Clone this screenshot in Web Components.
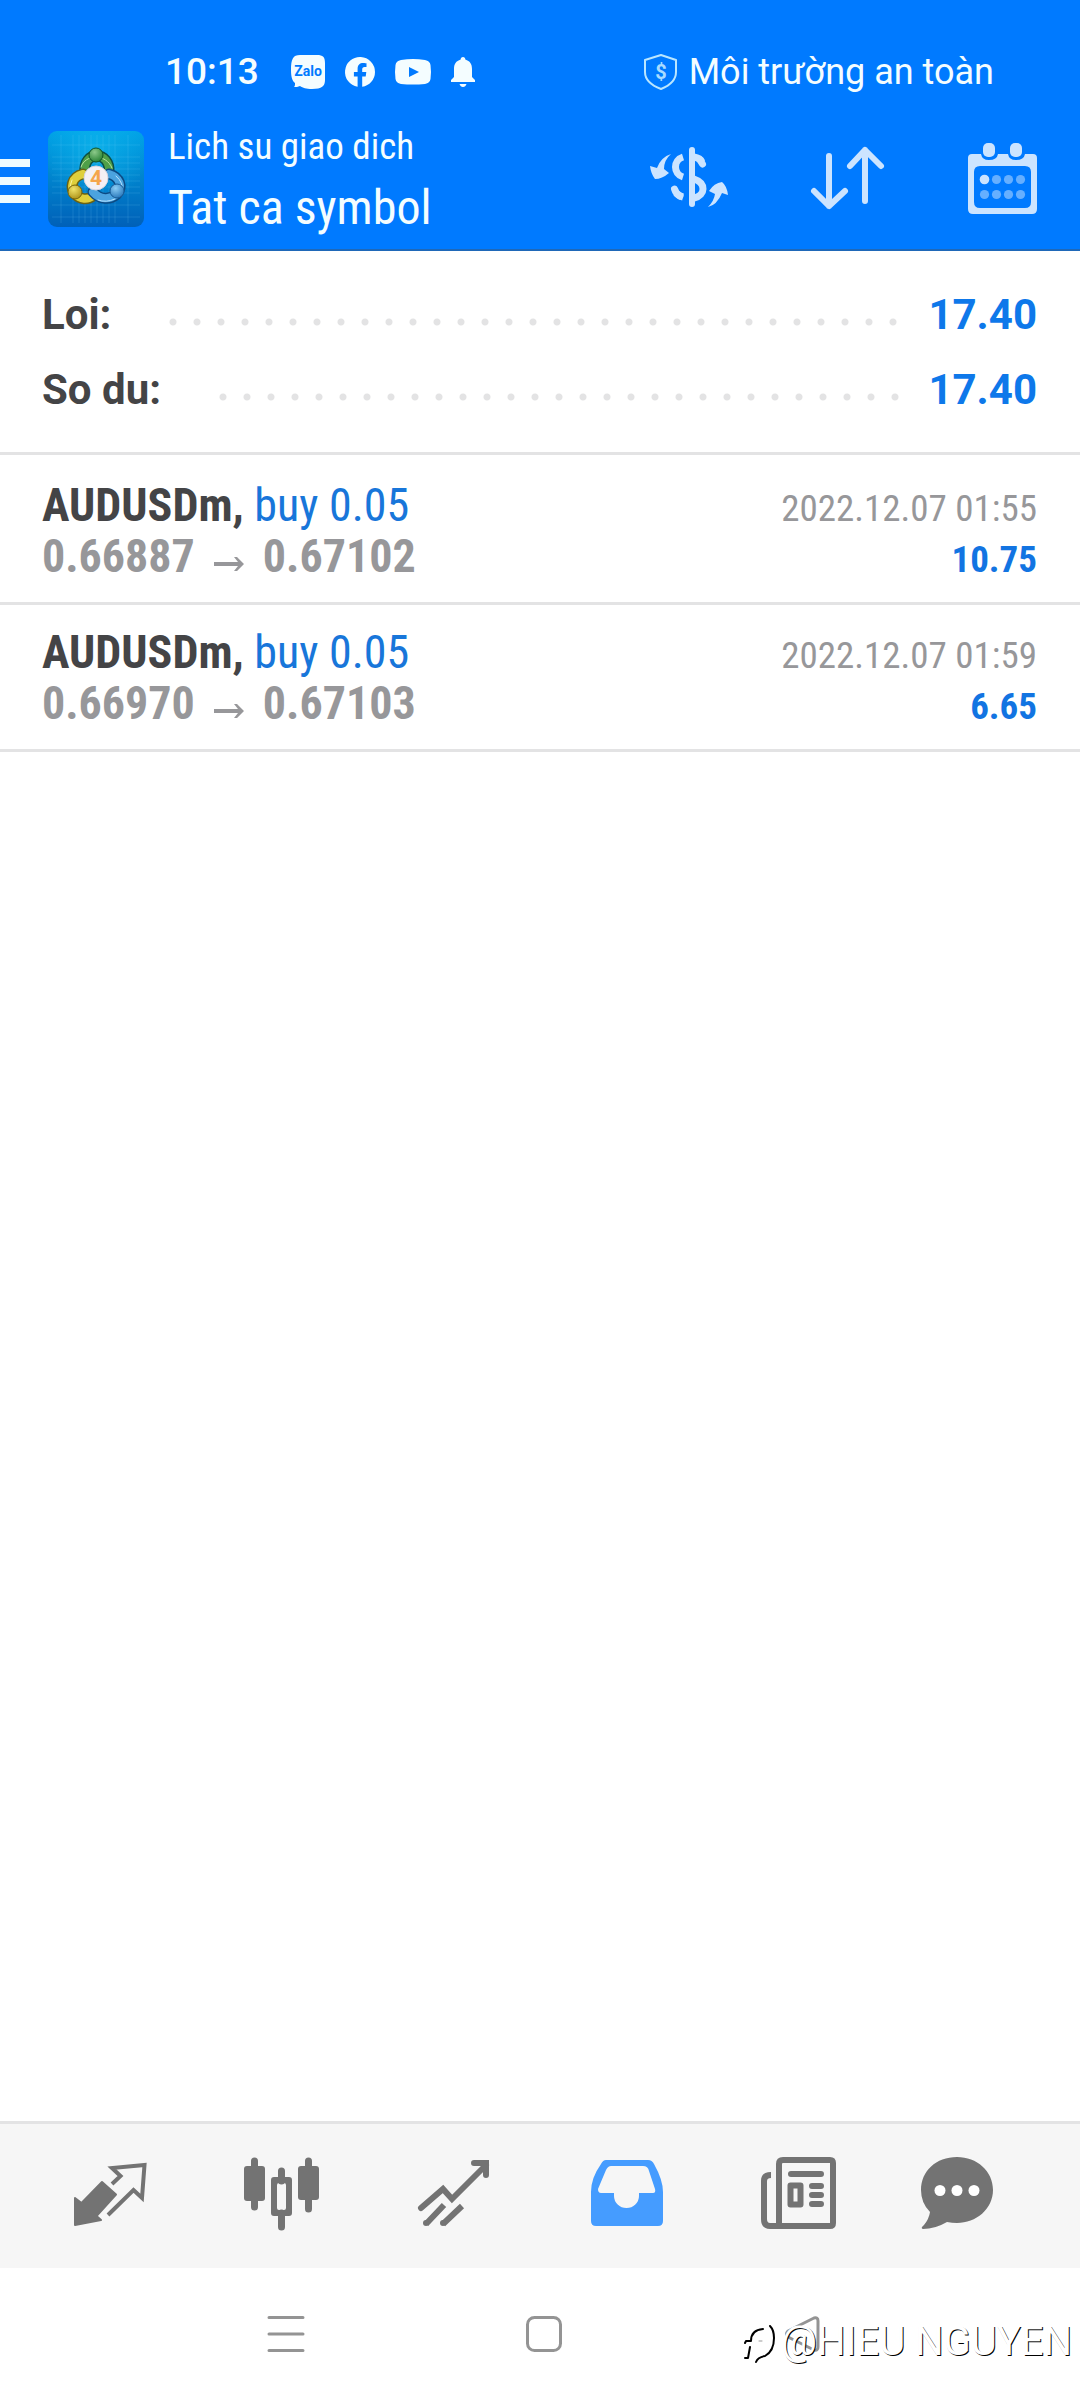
<!DOCTYPE html>
<html lang="vi">
<head>
<meta charset="utf-8">
<meta name="viewport" content="width=device-width, initial-scale=1">
<title>Lich su giao dich</title>
<style>
  html, body { margin: 0; height: 100%; }
  body { background: #fff; font-family: Roboto, "Noto Sans", sans-serif; }
</style>
</head>
<body>
<history-app></history-app>
<script>
const BASE = `
  *, *::before, *::after { box-sizing: border-box; }
  svg { display: block; flex: none; overflow: visible; }
  button { appearance: none; border: 0; padding: 0; margin: 0; background: none; font: inherit; color: inherit; cursor: pointer; }
`;
const CONDENSED = `"Roboto Condensed", "Liberation Sans Narrow", sans-serif`;

function define(name, html) {
  const t = document.createElement('template');
  t.innerHTML = html;
  customElements.define(name, class extends HTMLElement {
    constructor() {
      super();
      this.attachShadow({ mode: 'open' }).append(t.content.cloneNode(true));
    }
  });
}

define('status-bar', `
<style>${BASE}
  :host { display: flex; align-items: center; justify-content: space-between; height: 100px; padding: 44px 86px 0 165px; color: #f4fdff; font-size: 36px; line-height: 56px; }
  .group { display: flex; align-items: center; }
  .left { gap: 32px; }
  time { font-size: 37px; font-weight: 500; }
  .icons { display: flex; align-items: center; gap: 20px; }
  .right { gap: 11px; }
</style>
<div class="group left">
  <time>10:13</time>
  <div class="icons">
    <svg width="34" height="34" viewBox="0 0 34 34"><path fill="currentColor" d="M9 0h17c6 0 8 2 8 8v17c0 6-3 9-13 9-6 0-9-1-12-3-2 1-4 1-6 1 1-1 1-2 1-4C1 26 0 21 0 15 0 4 2 0 9 0Z"/><text x="17" y="21" text-anchor="middle" font-family="Roboto" font-weight="700" font-size="14" fill="#007aff">Zalo</text></svg>
    <svg width="30" height="30" viewBox="0 0 30 30"><path fill="currentColor" d="M30 15A15 15 0 1 0 12.600 29.800V19.400H8.900V15h3.700v-3.300c0-3.800 2.200-5.800 5.600-5.800 1.600 0 3.300.3 3.300.3v3.700h-1.900c-1.800 0-2.400 1.100-2.400 2.300V15h4.100l-.6 4.400h-3.500v10.400A15 15 0 0 0 30 15Z"/></svg>
    <svg width="36" height="26" viewBox="0 0 36 26"><path fill="currentColor" fill-rule="evenodd" d="M6 1Q18-1 30 1q5 1 5.500 5 1 7 0 14-.5 4-5.500 5-12 1-24 0-5-1-5.500-5-1-7 0-14Q1 2 6 1Zm8 7v10l10-5Z"/></svg>
    <svg width="24" height="30" viewBox="0 0 24 30"><path fill="currentColor" d="M12 0c1.500 0 2.300 1 2.300 2.500C19 4 21 7 21 12v8l3 3v2H0v-2l3-3v-8c0-5 2-8 6.700-9.500C9.700 1 10.500 0 12 0ZM8.500 27h7q-1 3-3.500 3t-3.500-3Z"/></svg>
  </div>
</div>
<div class="group right">
  <svg width="34" height="36" viewBox="0 0 34 36"><path fill="none" stroke="#b9e6ff" stroke-width="2" stroke-linejoin="round" d="M17 1 32 6V18Q32 29 17 35 1 29 1 18V6Z"/><text x="17" y="25" text-anchor="middle" font-family="Roboto" font-weight="700" font-size="20" fill="#a9dcff">$</text></svg>
  <span>Môi trường an toàn</span>
</div>`);

define('app-logo', `
<style>${BASE} :host { display: block; }</style>
<svg width="96" height="96" viewBox="0 0 96 96" role="img" aria-label="MetaTrader 4">
  <defs>
    <linearGradient id="bg" x1="0" y1="0" x2="0" y2="1"><stop offset="0" stop-color="#00a2e6"/><stop offset=".45" stop-color="#0086cf"/><stop offset="1" stop-color="#0060b8"/></linearGradient>
    <radialGradient id="glow" cx=".5" cy=".2" r=".55"><stop offset="0" stop-color="#12bdf0" stop-opacity=".6"/><stop offset="1" stop-color="#12bdf0" stop-opacity="0"/></radialGradient>
    <radialGradient id="g" cx=".4" cy=".3" r=".8"><stop offset="0" stop-color="#8cc98a"/><stop offset="1" stop-color="#1d7a2b"/></radialGradient>
    <radialGradient id="y" cx=".4" cy=".3" r=".8"><stop offset="0" stop-color="#f1e36a"/><stop offset="1" stop-color="#a68a10"/></radialGradient>
    <radialGradient id="b" cx=".4" cy=".3" r=".8"><stop offset="0" stop-color="#8ccdf5"/><stop offset="1" stop-color="#1e6fb5"/></radialGradient>
  </defs>
  <rect width="96" height="96" rx="9" fill="url(#bg)"/><rect width="96" height="96" rx="9" fill="url(#glow)"/>
  <path stroke="#7fd3ff" stroke-opacity=".16" fill="none" d="M13 4V92M25 4V92M31 4V92M37 4V92M43 4V92M49 4V92M55 4V92M61 4V92M67 4V92M80 4V92M4 14H92M4 26H92M4 32H92M4 38H92M4 44H92M4 50H92M4 56H92M4 62H92M4 74H92M4 86H92"/>
  <g fill="none" stroke-linecap="round">
    <path stroke="#0d4f45" stroke-width="11" d="M37 42C34 19 63 19 61 42"/><path stroke="#4f9f48" stroke-width="8" d="M37 42C34 19 63 19 61 42"/>
    <path stroke="#6b6212" stroke-width="11" d="M35 43C23 46 22 57 27 63 32 69 40 69 45 65"/><path stroke="#dfcf3c" stroke-width="8" d="M35 43C23 46 22 57 27 63 32 69 40 69 45 65"/>
    <path stroke="#0c4a83" stroke-width="11" d="M61 43C72 46 75 56 69 63 62 69 52 69 45 61"/><path stroke="#4ba3df" stroke-width="8" d="M61 43C72 46 75 56 69 63 62 69 52 69 45 61"/>
    <path stroke="#b9e3a0" stroke-width="1" d="M33 36C37 23 58 22 64 37"/><path stroke="#fbf5a0" stroke-width="1" d="M24 49Q20 58 25 65"/><path stroke="#b8e2ff" stroke-width="1" d="M68 45Q76 52 74 60M50 69Q58 72 67 68"/>
  </g>
  <circle cx="48" cy="24" r="7" fill="url(#g)" stroke="#115227"/><circle cx="27" cy="61" r="7" fill="url(#y)" stroke="#77640c"/><circle cx="69" cy="60" r="7" fill="url(#b)" stroke="#185b96"/>
  <circle cx="48" cy="47" r="12" fill="#f4f0f4" stroke="#d5d3de"/>
  <text x="48" y="54" text-anchor="middle" font-family="Roboto" font-weight="700" font-size="21" fill="#f5a54a">4</text>
</svg>`);

define('app-header', `
<style>${BASE}
  :host { display: flex; align-items: center; height: 151px; padding: 9px 43px 0 0; border-bottom: 2px solid #1f68b8; color: #f4fdff; font-family: ${CONDENSED}; }
  .menu { margin-right: 18px; padding-top: 4px; }
  .titles { flex: 1; margin: 8px 0 0 24px; }
  h1, p { margin: 0; font-weight: 400; white-space: nowrap; }
  p { font-size: 37px; line-height: 50px; }
  h1 { font-size: 48px; line-height: 72px; }
  .actions { display: flex; align-items: center; gap: 83px; padding-bottom: 3px; color: #cce4ff; }
</style>
<button class="menu" aria-label="Menu"><svg width="30" height="44" viewBox="0 0 30 44"><path fill="#ecfbff" d="M0 0h30v8H0ZM0 18h30v8H0ZM0 36h30v8H0Z"/></svg></button>
<app-logo></app-logo>
<div class="titles"><p><slot name="section"></slot></p><h1><slot></slot></h1></div>
<div class="actions">
  <button aria-label="Symbol"><svg width="78" height="62" viewBox="0 0 78 62"><g fill="none" stroke="currentColor" stroke-width="7"><path stroke-width="6" stroke-linecap="round" d="M42 3V57"/><path d="M33 10C23 13 23 27 33 30"/><path stroke-linecap="round" d="M24.500 42Q26 47 30 49"/><path d="M26 46Q29 49 33 50"/><path d="M44 10Q50 11 52 15"/><path stroke-linecap="round" d="M50 13 52.500 17"/><path d="M44 32C56 36 56 48 44 51"/></g><path fill="currentColor" d="M21 7Q14 13 14 22L19 26Q12 32 5 32 1 27 0 19L7 21Q11 10 21 7ZM58 60Q64 54 65 47L59 44Q64 36 72 35 77 39 78 48L72 46Q67 58 58 60Z"/></svg></button>
  <button aria-label="Sort"><svg width="74" height="64" viewBox="0 0 74 64"><path fill="none" stroke="currentColor" stroke-width="6" stroke-linecap="round" stroke-linejoin="round" d="M18 10V60M3 45 18 60 34 45M54 55V4M39 20 54 4 70 20"/></svg></button>
  <button aria-label="Calendar"><svg width="69" height="72" viewBox="0 0 69 72"><path fill="currentColor" fill-rule="evenodd" d="M4 12H13Q14 18 21 18 29 18 30 12H40Q41 18 48 18 56 18 57 12H65Q69 12 69 16V67Q69 72 64 72H5Q0 72 0 67V16Q0 12 4 12ZM12 24Q6 24 6 30V60Q6 66 12 66H57Q63 66 63 60V30Q63 24 57 24Z"/><rect x="15" y="1" width="12" height="14" rx="5" fill="currentColor"/><rect x="42" y="1" width="12" height="14" rx="5" fill="currentColor"/><circle cx="16.500" cy="37.500" r="4.800" fill="currentColor"/><g fill="#66afff"><circle cx="28.500" cy="37.500" r="4.600"/><circle cx="40.500" cy="37.500" r="4.600"/><circle cx="52.500" cy="37.500" r="4.600"/><circle cx="16.500" cy="52.500" r="4.600"/><circle cx="28.500" cy="52.500" r="4.600"/><circle cx="40.500" cy="52.500" r="4.600"/><circle cx="52.500" cy="52.500" r="4.600"/></g></svg></button>
</div>`);

define('summary-line', `
<style>${BASE}
  :host { display: flex; align-items: center; height: 75px; font-size: 42px; line-height: 75px; font-weight: 700; color: #444446; }
  .dots { flex: 1; height: 24px; margin: 14px 24px 0 50px; background: radial-gradient(circle, #e3e3e4 3px, transparent 4px) 0 50% / 24px 24px repeat-x; }
  .value { color: #0e78ea; }
</style>
<span><slot></slot></span><span class="dots"></span><span class="value"><slot name="value"></slot></span>`);

define('trade-row', `
<style>${BASE}
  :host { display: flex; justify-content: space-between; height: 147px; padding: 22px 43px 0 42px; border-bottom: 3px solid #e3e3e4; font-family: ${CONDENSED}; font-size: 46px; line-height: 51px; white-space: nowrap; color: #97979a; }
  .symbol { font-weight: 700; color: #444446; }
  .side { color: #1876da; }
  .prices { display: flex; font-weight: 700; gap: 19px; }
  .prices svg { margin-top: 26px; }
  .end { text-align: right; font-size: 37px; padding-top: 3px; }
  .profit { font-weight: 700; color: #1274e2; }
</style>
<div>
  <div><span class="symbol"><slot name="symbol"></slot>,</span> <span class="side"><slot name="side"></slot></span></div>
  <div class="prices"><slot name="open"></slot><svg width="30" height="14" viewBox="0 0 30 14"><path fill="#97979a" d="M0 5H24L20 0H23L30 7 23 14H20L24 9H0Z"/></svg><slot name="close"></slot></div>
</div>
<div class="end"><div><slot name="time"></slot></div><div class="profit"><slot name="profit"></slot></div></div>`);

define('tab-bar', `
<style>${BASE}
  :host { display: flex; height: 147px; border-top: 3px solid #e3e3e4; background: #f6f6f6; padding: 0 50px 0 24px; color: #737373; }
  button { flex: 172 1 0; display: flex; justify-content: center; padding-top: 33px; }
  button:last-child { flex-grow: 145; }
  .on { color: #459cff; }
</style>
<button aria-label="Quotes"><svg width="74" height="74" viewBox="0 0 74 74"><path fill="currentColor" stroke="currentColor" stroke-width="2" stroke-linejoin="round" d="M2 41 8.500 46 29 25 43 37.500 23.500 59 28 63 2 68Z"/><path fill="none" stroke="currentColor" stroke-width="4" d="M39 27 47.500 19 39 11 71.500 8 69 41 60.500 33 35 58"/></svg></button>
<button aria-label="Charts"><svg width="76" height="74" viewBox="0 0 76 74"><path fill="none" stroke="currentColor" stroke-width="7" stroke-linecap="round" d="M10.500 4V50M64.500 4V52M37.500 14V24M37.500 56V70"/><rect y="9" width="21" height="35" rx="3" fill="currentColor"/><rect x="54" y="9" width="21" height="34" rx="3" fill="currentColor"/><path fill="currentColor" fill-rule="evenodd" d="M30 20H45Q48 20 48 23V56Q48 59 45 59H30Q27 59 27 56V23Q27 20 30 20ZM35 26Q33 26 33 28V51Q33 53 35 53H40Q42 53 42 51V28Q42 26 40 26Z"/></svg></button>
<button aria-label="Trade"><svg width="72" height="74" viewBox="0 0 72 74"><g fill="none" stroke="currentColor" stroke-width="6"><path stroke-linecap="round" d="M3 51 25 32 34 42 68 8"/><path stroke-linecap="round" d="M56 6H68V18"/><path d="M8 67 26 48M25 67 44 49"/></g><circle cx="8" cy="66" r="3" fill="currentColor"/><circle cx="25" cy="66" r="3" fill="currentColor"/></svg></button>
<button class="on" aria-label="History"><svg width="72" height="74" viewBox="0 0 72 74"><path fill="currentColor" fill-rule="evenodd" d="M15 3H57Q61 3 63 7 72 23 72 35V64Q72 69 67 69H5Q0 69 0 64V35Q0 21 10 7 12 3 15 3ZM20 9Q17 9 15 13L7 32Q7 36 10 36H23V39A12.500 12 0 0 0 48 39V36H62Q65 36 64 32L58 14Q57 9 52 9Z"/></svg></button>
<button aria-label="News"><svg width="76" height="74" viewBox="0 0 76 74"><path fill="none" stroke="currentColor" stroke-width="6" d="M10 18Q3 18 3 24V62Q3 69 9 69H69Q72 69 72 66V6Q72 3 69 3H22Q18 3 18 7V69"/><path stroke="currentColor" stroke-width="6" stroke-linecap="round" d="M30 17H60M51 29H60M51 38H60M51 47H60"/><rect x="29.500" y="28.500" width="10" height="19" fill="none" stroke="currentColor" stroke-width="6" stroke-linejoin="round"/></svg></button>
<button aria-label="Messages"><svg width="72" height="74" viewBox="0 0 72 74"><path fill="currentColor" d="M36 0C56 0 72 14 72 33S55 66 36 66Q31 66 26 65 14 72 2 72-1 71 3 68 8 62 9 55 0 46 0 33C0 14 15 0 36 0Z"/><g fill="#fff"><circle cx="19" cy="33.500" r="5.500"/><circle cx="36" cy="33.500" r="5.500"/><circle cx="53" cy="33.500" r="5.500"/></g></svg></button>`);

define('system-nav', `
<style>${BASE}
  :host { display: flex; position: relative; height: 132px; padding: 0 149px 0 157px; background: #fff; }
  button { flex: 1; display: flex; align-items: center; justify-content: center; }
  svg { fill: none; stroke: #949494; stroke-width: 3; stroke-linecap: round; stroke-linejoin: round; }
  .mark { position: absolute; right: 8px; top: 50px; display: flex; align-items: center; gap: 6px; font-size: 40px; line-height: 48px; font-weight: 400; color: #fff; text-shadow: 1px 1px 0 #000; white-space: nowrap; }
</style>
<button aria-label="Recent"><svg width="36" height="36" viewBox="0 0 36 36"><path d="M1 1.500H35M1 18H35M1 34.500H35"/></svg></button>
<button aria-label="Home"><svg width="36" height="36" viewBox="0 0 36 36"><rect x="1.500" y="1.500" width="33" height="33" rx="7"/></svg></button>
<button aria-label="Back"><svg width="36" height="36" viewBox="0 0 36 36"><path d="M30 2 4 15Q1 18 4 21L30 34Q34 35 34 31V5Q34 1 30 2Z"/></svg></button>
<div class="mark"><svg width="32" height="42" viewBox="0 0 32 42"><g stroke="#000" stroke-width="2"><path d="M2 22 3 20H8Q8 9 20 8M7 26 5 37H2"/><path d="M27 5Q31 9 31 17 31 30 22 35 15 36 13 41"/></g><path stroke="#999" stroke-width="1" d="M16 20H19"/></svg><span><slot></slot></span></div>`);

define('history-app', `
<style>${BASE}
  :host { display: flex; flex-direction: column; min-height: 100vh; background: #fff; }
  header { background: #007aff; }
  .summary { padding: 26px 43px 25px 42px; border-bottom: 3px solid #e3e3e4; }
  main { flex: 1; padding-top: 3px; }
</style>
<header><status-bar></status-bar><app-header><span slot="section">Lich su giao dich</span>Tat ca symbol</app-header></header>
<section class="summary">
  <summary-line>Loi:<span slot="value">17.40</span></summary-line>
  <summary-line>So du:<span slot="value">17.40</span></summary-line>
</section>
<main>
  <trade-row><span slot="symbol">AUDUSDm</span><span slot="side">buy 0.05</span><span slot="open">0.66887</span><span slot="close">0.67102</span><time slot="time">2022.12.07 01:55</time><span slot="profit">10.75</span></trade-row>
  <trade-row><span slot="symbol">AUDUSDm</span><span slot="side">buy 0.05</span><span slot="open">0.66970</span><span slot="close">0.67103</span><time slot="time">2022.12.07 01:59</time><span slot="profit">6.65</span></trade-row>
</main>
<tab-bar></tab-bar>
<system-nav>@HIEU NGUYEN</system-nav>`);
</script>
</body>
</html>
